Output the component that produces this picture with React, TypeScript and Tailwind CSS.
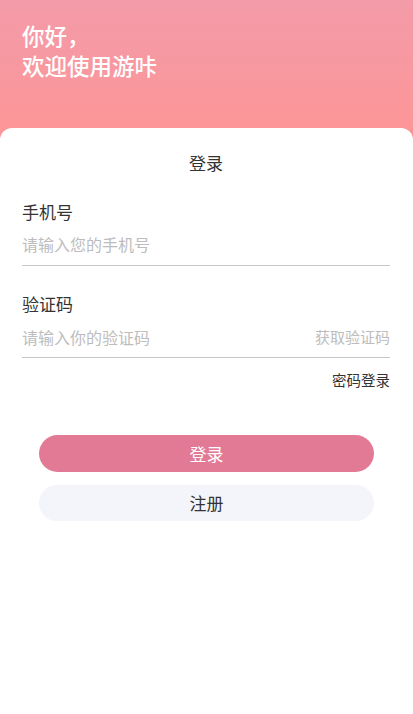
import React from 'react';

const font = { fontFamily: '"Noto Sans CJK SC", "Noto Sans", sans-serif' };

const App: React.FC = () => {
  return (
    <div className="w-[413px] h-[714px] bg-white overflow-hidden" style={font}>
      {/* Header */}
      <div className="h-[140px] bg-gradient-to-b from-[#f39ba9] to-[#fd9596] px-[22px] pt-[20px]">
        <h1 className="text-[22.5px] leading-[30px] font-medium text-white">
          你好，
          <br />
          欢迎使用游咔
        </h1>
      </div>

      {/* Card */}
      <div className="-mt-[12px] rounded-t-[12px] bg-white pl-[22px] pr-[23px] pt-[22px]">
        <p className="text-center text-[17px] leading-[26px] text-[#333]">登录</p>

        {/* Phone */}
        <div className="mt-[23px]">
          <p className="text-[17px] leading-[26px] text-[#333]">手机号</p>
          <div className="mt-[6px] flex h-[26px] items-center text-[16px] text-[#bdbdbd]">
            请输入您的手机号
          </div>
          <div className="mt-[8px] h-px bg-[#c8c8c8]" />
        </div>

        {/* Code */}
        <div className="mt-[25px]">
          <p className="text-[17px] leading-[26px] text-[#333]">验证码</p>
          <div className="mt-[7px] flex h-[26px] items-center justify-between text-[16px] text-[#bdbdbd]">
            <span>请输入你的验证码</span>
            <span className="text-[15px]">获取验证码</span>
          </div>
          <div className="mt-[7px] h-px bg-[#c8c8c8]" />
        </div>

        <div className="mt-[11px] flex justify-end">
          <span className="text-[14.5px] leading-[22px] text-[#333]">密码登录</span>
        </div>

        {/* Buttons */}
        <div className="mt-[44px] flex flex-col gap-[13px] pl-[17px] pr-[16px]">
          <button className="h-[37px] w-full rounded-full bg-[#e27a95] text-[17px] text-white">
            登录
          </button>
          <button className="h-[36px] w-full rounded-full bg-[#f4f5fb] text-[17px] text-[#333]">
            注册
          </button>
        </div>
      </div>
    </div>
  );
};

export default App;
